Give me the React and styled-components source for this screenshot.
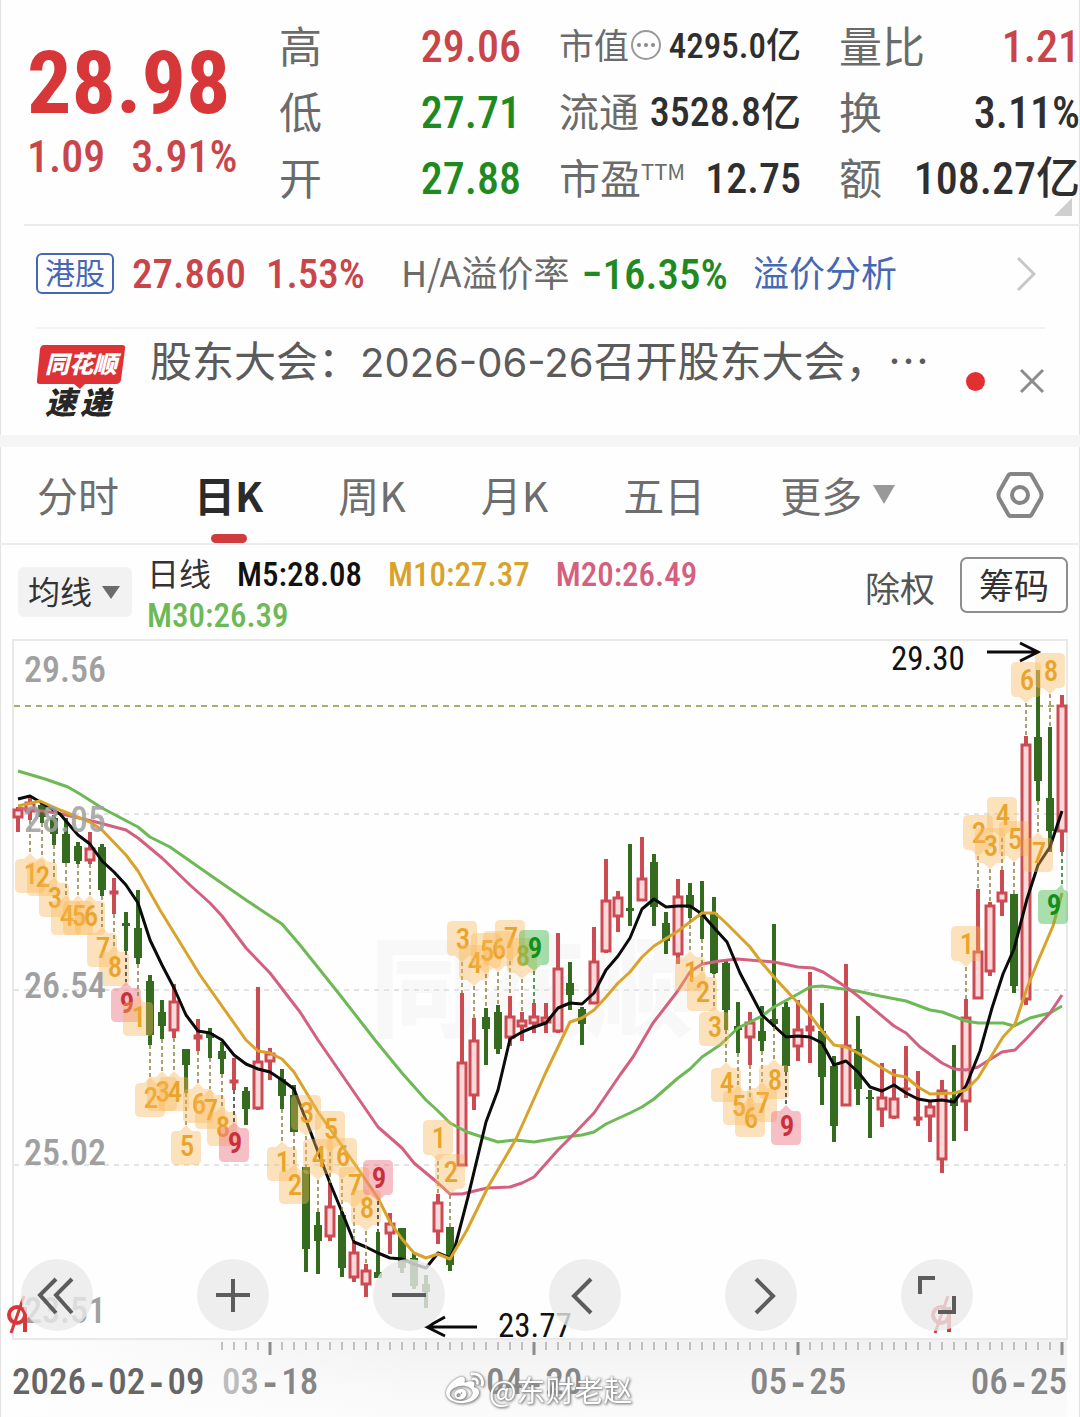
import React from "react";
import styled, { createGlobalStyle } from "styled-components";
import { FaWeibo } from "react-icons/fa";

const CJK = `"Noto Sans CJK SC", sans-serif`;
const NUM = `"Roboto Condensed", "Liberation Sans Narrow", Roboto, "Noto Sans CJK SC", sans-serif`;

const C = {
  red: "#d8373a",
  softRed: "#c9454a",
  green: "#1f8a1f",
  ink: "#2f2f2f",
  label: "#6b6b6b",
  blue: "#4668b4",
  gold: "#d9a32b",
  pink: "#d4607f",
  lime: "#6cb955",
};

const GlobalStyle = createGlobalStyle`
  * { box-sizing: border-box; }
  body { margin: 0; background: #fefefe; font-family: ${CJK}; }
  button, select { font-family: inherit; }
`;

const Page = styled.main`
  position: relative;
  box-shadow: inset 1px 0 #e2e2e2, inset -1px 0 #e2e2e2;
  overflow: hidden;
`;

/* ---------- quote header ---------- */

const Quote = styled.section`
  display: grid;
  grid-template-columns: 214fr 242fr 242fr 241fr;
  column-gap: 38px;
  padding: 14px 0 12px 27px;
`;

const PriceBlock = styled.div`
  display: flex;
  flex-direction: column;
  min-width: 0;
  padding-top: 22px;
  color: ${C.red};
  font-family: ${NUM};
  white-space: nowrap;
`;

const Price = styled.div`
  font-size: 88px;
  font-weight: 700;
  line-height: 94px;
`;

const Change = styled.div`
  display: flex;
  gap: 26px;
  color: ${C.softRed};
  font-size: 44px;
  font-weight: 500;
  line-height: 54px;
`;

const Stats = styled.dl`
  margin: 0;
  min-width: 0;
  display: grid;
  grid-auto-rows: 66px;
`;

const Stat = styled.div`
  display: flex;
  align-items: center;
  justify-content: space-between;
  white-space: nowrap;
`;

const StatLabel = styled.dt`
  display: flex;
  align-items: center;
  padding-bottom: 6px;
  color: ${C.label};
  font-size: ${(p) => p.$size || 43}px;
  line-height: 60px;
`;

const StatValue = styled.dd`
  margin: 0;
  color: ${(p) => p.$color || C.ink};
  font-family: ${NUM};
  font-size: ${(p) => p.$size || 44}px;
  font-weight: 500;
  line-height: 66px;
`;

const Ttm = styled.span`
  align-self: flex-start;
  font-family: ${CJK};
  font-size: 22px;
  line-height: 48px;
`;

const Corner = styled.i`
  position: absolute;
  top: 198px;
  right: 8px;
  border-left: 18px solid transparent;
  border-bottom: 18px solid #cfcfcf;
`;

/* ---------- HK row and news ---------- */

const HkRow = styled.section`
  display: flex;
  align-items: center;
  height: 103px;
  margin-left: 24px;
  padding: 0 44px 6px 12px;
  border-top: 2px solid #ebebeb;
  white-space: nowrap;
`;

const Tag = styled.span`
  width: 78px;
  height: 41px;
  border: 2px solid ${C.blue};
  border-radius: 6px;
  color: ${C.blue};
  font-size: 30px;
  line-height: 33px;
  text-align: center;
`;

const Figure = styled.span`
  margin-left: ${(p) => p.$gap}px;
  color: ${(p) => p.$color};
  font-family: ${NUM};
  font-size: ${(p) => p.$size || 41}px;
  font-weight: 500;
`;

const Premium = styled.span`
  margin-left: 36px;
  padding-bottom: 6px;
  color: ${C.label};
  font-size: 36px;
`;

const BlueLink = styled.a`
  margin-left: 25px;
  padding-bottom: 6px;
  color: ${C.blue};
  font-size: 36px;
  text-decoration: none;
`;

const IconButton = styled.button`
  display: flex;
  padding: 0;
  border: 0;
  background: none;
  cursor: pointer;
  ${(p) => p.$push && "margin-left: auto;"}
`;

const News = styled.section`
  display: flex;
  align-items: flex-start;
  height: 108px;
  margin: 0 35px 0 36px;
  border-top: 2px solid #f3f3f3;
`;

const Logo = styled.svg`
  flex: none;
  margin-top: 15px;
`;

const NewsText = styled.p`
  flex: 1;
  margin: 0 0 0 22px;
  overflow: hidden;
  color: #5b5b5b;
  font-size: 42px;
  line-height: 60px;
  white-space: nowrap;
`;

const NewsDate = styled.span`
  font-family: Inter, sans-serif;
  font-size: 40px;
`;

const NewsTools = styled.div`
  display: flex;
  align-items: center;
  gap: 34px;
  padding-top: 39px;
`;

const Dot = styled.i`
  width: 19px;
  height: 19px;
  border-radius: 50%;
  background: #e42f31;
`;

/* ---------- tabs ---------- */

const Tabs = styled.nav`
  display: flex;
  align-items: center;
  gap: 75px;
  height: 110px;
  padding: 0 36px 0 37px;
  border-top: 12px solid #f5f5f5;
  border-bottom: 2px solid #ececec;
`;

const Tab = styled.button`
  position: relative;
  display: flex;
  align-items: center;
  gap: 11px;
  height: 96px;
  padding: 0 0 2px;
  border: 0;
  background: none;
  color: ${(p) => (p.$active ? "#2b2b2b" : "#6e6e6e")};
  font-size: 41px;
  font-weight: ${(p) => (p.$active ? 700 : 400)};
  white-space: nowrap;
  cursor: pointer;
  ${(p) =>
    p.$active &&
    `&::after {
      content: "";
      position: absolute;
      left: 50%;
      bottom: 0;
      width: 36px;
      height: 9px;
      margin-left: -18px;
      border-radius: 5px;
      background: #cf3c3e;
    }`}
`;

const Triangle = styled.i`
  border: ${(p) => p.$size}px solid transparent;
  border-top: ${(p) => p.$depth}px solid ${(p) => p.$color};
  border-bottom: 0;
`;

/* ---------- legend ---------- */

const LegendBar = styled.section`
  display: flex;
  align-items: flex-start;
  height: 94px;
  padding: 9px 12px 0 18px;
`;

const SelectBox = styled.label`
  display: flex;
  align-items: center;
  width: 114px;
  height: 50px;
  margin-top: 13px;
  padding: 0 12px 0 10px;
  border-radius: 6px;
  background: #f2f2f2;
`;

const Select = styled.select`
  appearance: none;
  flex: 1;
  width: 66px;
  padding: 0 0 4px;
  border: 0;
  background: none;
  color: #333;
  font-size: 32px;
  line-height: 46px;
`;

const Legend = styled.div`
  flex: 1;
  display: flex;
  flex-wrap: wrap;
  align-content: flex-start;
  column-gap: 26px;
  max-width: 600px;
  margin-left: 15px;
`;

const LegendItem = styled.span`
  color: ${(p) => p.$color};
  font-family: ${(p) => (p.$cjk ? CJK : NUM)};
  font-size: ${(p) => (p.$cjk ? 32 : 33)}px;
  font-weight: ${(p) => (p.$cjk ? 400 : 500)};
  line-height: ${(p) => (p.$cjk ? 36 : 41)}px;
  white-space: nowrap;
`;

const LegendTools = styled.div`
  display: flex;
  align-items: center;
  gap: 25px;
  margin-left: auto;
  padding-top: 3px;
`;

const PlainButton = styled.button`
  padding: 4px 0 0;
  border: 0;
  background: none;
  color: #555;
  font-size: 35px;
  line-height: 48px;
`;

const BoxButton = styled.button`
  width: 108px;
  height: 56px;
  padding: 0 0 2px;
  border: 2px solid #8e8e8e;
  border-radius: 7px;
  background: none;
  color: #333;
  font-size: 35px;
  line-height: 48px;
`;

/* ---------- chart ---------- */

const ChartPanel = styled.section`
  position: relative;
`;

const ChartSvg = styled.svg`
  display: block;
  width: 100%;
  height: auto;
`;

const Controls = styled.div`
  position: absolute;
  left: 21px;
  bottom: 86px;
  display: flex;
  gap: 104px;
`;

const Round = styled.button`
  display: flex;
  width: 72px;
  height: 72px;
  padding: 0;
  border: 0;
  border-radius: 50%;
  background: rgba(234, 234, 234, 0.8);
  cursor: pointer;
`;

const Watermark = styled.div`
  position: absolute;
  left: 446px;
  bottom: 7px;
  display: flex;
  align-items: center;
  gap: 5px;
  color: #fff;
  font-size: 29px;
  line-height: 42px;
  white-space: nowrap;
  filter: drop-shadow(0 0 1px #777) drop-shadow(1px 1px 1px #999);
`;

// [kind, wick top, wick bottom, body top, body bottom]
const CANDLES = [
  ["r", 807, 832, 809, 818], ["r", 796, 820, 802, 812], ["g", 802, 823, 805, 817], ["g", 815, 845, 818, 834],
  ["g", 818, 863, 834, 863], ["g", 842, 864, 846, 861], ["r", 832, 864, 848, 861], ["g", 844, 896, 847, 890],
  ["r", 878, 914, 891, 894], ["g", 912, 951, 923, 926], ["g", 890, 964, 928, 958], ["g", 975, 1045, 981, 1035],
  ["g", 1000, 1039, 1012, 1026], ["r", 984, 1038, 1001, 1031], ["g", 1049, 1093, 1049, 1065], ["r", 1019, 1051, 1035, 1039],
  ["g", 1028, 1058, 1033, 1038], ["g", 1042, 1074, 1051, 1059], ["r", 1058, 1090, 1080, 1083], ["g", 1087, 1125, 1091, 1109],
  ["r", 987, 1110, 1061, 1109], ["r", 1048, 1080, 1053, 1062], ["g", 1069, 1109, 1079, 1096], ["g", 1085, 1132, 1095, 1132],
  ["g", 1167, 1272, 1167, 1249], ["g", 1212, 1274, 1225, 1241], ["r", 1183, 1241, 1206, 1237], ["g", 1212, 1277, 1215, 1268],
  ["r", 1242, 1282, 1252, 1278], ["r", 1264, 1297, 1270, 1285], ["g", 1232, 1278, 1272, 1278], ["r", 1213, 1254, 1223, 1234],
  ["g", 1228, 1273, 1228, 1268], ["g", 1253, 1289, 1258, 1286], ["g", 1275, 1308, 1284, 1292], ["r", 1194, 1244, 1202, 1232],
  ["g", 1227, 1271, 1227, 1265], ["r", 993, 1166, 1062, 1166], ["r", 1018, 1110, 1040, 1096], ["g", 1008, 1065, 1017, 1029],
  ["g", 1005, 1054, 1012, 1049], ["r", 996, 1046, 1016, 1038], ["r", 1012, 1041, 1020, 1027], ["r", 1003, 1033, 1016, 1024],
  ["r", 1003, 1033, 1017, 1023], ["r", 933, 1033, 968, 1032], ["g", 962, 1010, 983, 995], ["g", 1007, 1045, 1009, 1024],
  ["r", 927, 1004, 961, 1004], ["r", 859, 953, 900, 952], ["r", 891, 932, 897, 917], ["g", 844, 926, 908, 911],
  ["r", 837, 901, 878, 901], ["g", 854, 926, 862, 907], ["g", 912, 954, 923, 941], ["r", 879, 964, 896, 955],
  ["g", 883, 918, 895, 908], ["g", 881, 939, 912, 917], ["g", 897, 974, 913, 973], ["g", 959, 1030, 963, 1010],
  ["g", 1002, 1053, 1026, 1030], ["r", 1012, 1065, 1022, 1038], ["g", 1006, 1051, 1031, 1041], ["g", 924, 1027, 1019, 1024],
  ["g", 1002, 1072, 1007, 1066], ["r", 1000, 1061, 1029, 1047], ["r", 972, 1063, 1026, 1031], ["g", 1003, 1105, 1031, 1077],
  ["g", 1056, 1142, 1066, 1126], ["r", 964, 1106, 1045, 1106], ["g", 1016, 1105, 1049, 1089], ["g", 1090, 1138, 1097, 1099],
  ["r", 1063, 1127, 1097, 1110], ["r", 1069, 1119, 1098, 1118], ["r", 1046, 1098, 1088, 1090], ["r", 1071, 1126, 1117, 1120],
  ["r", 1102, 1142, 1106, 1117], ["r", 1080, 1173, 1090, 1160], ["g", 1045, 1141, 1098, 1106], ["r", 999, 1131, 1017, 1102],
  ["r", 889, 999, 951, 999], ["r", 902, 976, 905, 972], ["r", 870, 916, 892, 902], ["g", 894, 993, 894, 986],
  ["r", 736, 1005, 744, 1000], ["g", 670, 801, 737, 781], ["g", 727, 852, 798, 831], ["r", 695, 852, 705, 832],
];

const LINES = [
  [C.lime, "18,771 45,779 68,787 80,794 102,808 138,827 150,837 170,847 210,875 246,900 258,908 282,924 300,945 340,995 375,1040 402,1073 426,1100 438,1111 450,1123 467,1132 498,1142 515,1140 534,1142 558,1138 582,1135 594,1132 606,1124 630,1113 642,1107 654,1099 678,1078 690,1069 702,1057 720,1045 738,1028 762,1016 774,1007 798,994 810,987 822,986 857,991 880,996 906,1001 930,1010 942,1012 966,1021 978,1023 1003,1023 1014,1026 1030,1018 1050,1013 1062,1006"],
  [C.pink, "18,808 50,812 66,815 96,822 126,830 138,838 162,858 190,885 210,903 222,916 246,948 270,973 300,1012 318,1040 378,1127 402,1148 414,1163 438,1183 450,1194 462,1194 487,1188 510,1187 522,1183 534,1177 558,1150 570,1138 594,1113 620,1075 633,1057 653,1023 677,992 690,972 702,964 720,961 737,959 774,962 798,967 813,968 823,972 846,987 858,996 894,1026 906,1033 920,1047 942,1063 954,1069 966,1070 978,1067 1002,1052 1015,1050 1027,1038 1050,1013 1062,995"],
  ["#0b0b0b", "18,799 30,796 42,803 60,814 78,835 90,844 102,861 114,872 126,885 138,903 150,940 162,965 174,988 186,1015 198,1031 210,1033 222,1040 234,1055 246,1064 258,1069 270,1072 282,1080 294,1089 306,1120 320,1157 330,1183 342,1212 354,1242 366,1247 378,1253 390,1258 402,1259 414,1264 426,1268 438,1253 450,1258 455,1247 468,1197 486,1122 498,1090 510,1039 522,1032 534,1027 546,1023 558,1008 570,1003 582,1004 594,993 606,970 618,956 630,938 642,909 654,899 666,907 678,906 690,906 702,914 716,930 727,942 740,973 762,1015 774,1026 786,1037 798,1036 810,1037 822,1043 834,1065 846,1061 858,1072 870,1087 882,1091 894,1085 906,1093 918,1099 930,1101 942,1100 954,1102 966,1086 980,1051 992,1008 1003,974 1014,949 1027,899 1038,865 1050,847 1062,811"],
  [C.gold, "18,806 40,801 60,810 90,822 102,830 126,855 138,871 160,910 200,975 246,1040 258,1051 270,1053 282,1059 294,1072 318,1112 340,1143 354,1163 378,1198 390,1222 402,1239 414,1253 426,1258 438,1254 450,1259 467,1230 488,1187 516,1139 546,1072 558,1047 570,1022 582,1018 594,1010 606,997 618,983 630,972 642,957 654,946 678,931 702,913 715,913 726,923 750,947 762,963 774,977 798,1003 810,1015 822,1031 834,1045 846,1047 858,1053 882,1068 894,1075 906,1077 918,1087 930,1094 954,1093 966,1090 978,1078 1003,1037 1015,1024 1027,988 1038,961 1053,926 1062,893"],
];

// [candle index, digit, digit centre y, side of the candle: "b" below or "a" above, tone]
const BADGES = [
  [1, 1, 874, "b"], [2, 2, 877, "b"], [3, 3, 898, "b"], [4, 4, 916, "b"], [5, 5, 916, "b"], [6, 6, 916, "b"],
  [7, 7, 948, "b"], [8, 8, 967, "b"], [9, 9, 1003, "b", "r"],
  [10, 1, 1017, "b"], [11, 2, 1098, "b"], [12, 3, 1092, "b"], [13, 4, 1092, "b"], [14, 5, 1146, "b"],
  [15, 6, 1104, "b"], [16, 7, 1110, "b"], [17, 8, 1127, "b"], [18, 9, 1143, "b", "r"],
  [22, 1, 1162, "b"], [23, 2, 1185, "b"],
  [24, 3, 1113, "a"], [25, 4, 1157, "a"], [26, 5, 1129, "a"], [27, 6, 1156, "a"], [28, 7, 1185, "a"],
  [29, 8, 1208, "a"], [30, 9, 1178, "a", "r"],
  [35, 1, 1138, "a"], [36, 2, 1172, "a"], [37, 3, 939, "a"], [38, 4, 963, "a"], [39, 5, 951, "a"],
  [40, 6, 949, "a"], [41, 7, 938, "a"], [42, 8, 956, "a"], [43, 9, 948, "a", "g"],
  [56, 1, 972, "b"], [57, 2, 992, "b"], [58, 3, 1027, "b"], [59, 4, 1083, "b"], [60, 5, 1106, "b"],
  [61, 6, 1118, "b"], [62, 7, 1103, "b"], [63, 8, 1080, "b"], [64, 9, 1126, "b", "r"],
  [79, 1, 944, "a"], [80, 2, 833, "a"], [81, 3, 846, "a"], [82, 4, 815, "a"], [83, 5, 839, "a"],
  [84, 6, 680, "a"], [85, 7, 853, "b"], [86, 8, 671, "a"], [87, 9, 905, "b", "g"],
];

const TONES = {
  y: ["#fbb95a", 0.4, "#e9a52b", "#8f8340"],
  r: ["#ee7483", 0.46, "#c9303b", "#333"],
  g: ["#4ebd55", 0.48, "#128f1c", "#1f7a2a"],
};

const xAt = (i) => 18 + 12 * i;

function Candle({ i, data: [kind, w1, w2, b1, b2] }) {
  const x = xAt(i);
  if (kind === "g") {
    return (
      <g fill="#356b1f">
        <rect x={x - 2} y={w1} width="4" height={w2 - w1} />
        <rect x={x - 4} y={b1} width="8" height={b2 - b1} />
      </g>
    );
  }
  const flat = b2 - b1 < 6;
  return (
    <g>
      <rect x={x - 2} y={w1} width="4" height={w2 - w1} fill="#cc4a52" />
      <rect
        x={x - 4}
        y={b1 + (flat ? 0 : 1)}
        width="8"
        height={Math.max(b2 - b1 - (flat ? 0 : 2), 2)}
        fill={flat ? "#cc4a52" : "#fbd9da"}
        stroke="#cc4a52"
        strokeWidth={flat ? 1 : 3}
      />
    </g>
  );
}

function Badge({ data: [i, digit, y, side, tone = "y"] }) {
  const x = xAt(i);
  const cx = Math.min(x, 1053);
  const [fill, alpha, ink, lead] = TONES[tone];
  const below = side === "b";
  const top = y - (below ? 15 : 18);
  const bottom = y + (below ? 19 : 17);
  const l = cx - 15;
  const r = cx + 15;
  const shape = below
    ? `M${l + 5},${top} H${x - 6} L${x},${top - 6} L${Math.min(x + 6, r - 4)},${top} H${r - 4} Q${r},${top} ${r},${top + 5} V${bottom - 5} Q${r},${bottom} ${r - 5},${bottom} H${l + 5} Q${l},${bottom} ${l},${bottom - 5} V${top + 5} Q${l},${top} ${l + 5},${top} Z`
    : `M${l + 5},${top} H${r - 5} Q${r},${top} ${r},${top + 5} V${bottom - 5} Q${r},${bottom} ${r - 5},${bottom} H${x + 7} L${x},${bottom + 6} L${x - 7},${bottom} H${l + 5} Q${l},${bottom} ${l},${bottom - 5} V${top + 5} Q${l},${top} ${l + 5},${top} Z`;
  const candle = CANDLES[i];
  return (
    <g>
      <line
        x1={x}
        x2={x}
        y1={below ? candle[2] : bottom + 6}
        y2={below ? top - 6 : candle[1]}
        stroke={lead}
        strokeWidth="1.5"
        strokeDasharray="4 3"
      />
      <path d={shape} fill={fill} fillOpacity={alpha} />
      <text x={cx + 1} y={y + 10} textAnchor="middle" fontFamily={NUM} fontSize="29" fontWeight={tone === "y" ? 500 : 600} fill={ink}>
        {digit}
      </text>
    </g>
  );
}

function ExRight({ x }) {
  return (
    <g stroke={C.red} fill="none">
      <circle cx={x} cy="1315" r="8" strokeWidth="4" />
      <path d={`M${x + 8},1307 V1332`} strokeWidth="4" />
      <path d={`M${x + 7},1296 L${x - 6},1333`} strokeWidth="3" />
    </g>
  );
}

const Hyphen = () => (
  <tspan fontFamily='"Liberation Mono", monospace' fontWeight="700">-</tspan>
);

function Chart() {
  const ticks = [];
  for (let x = 222; x <= 1062; x += 12) ticks.push(x);
  return (
    <ChartSvg viewBox="0 639 1080 778" role="img" aria-label="日K">
      <defs>
        <linearGradient id="axis" x1="0" x2="0" y1="0" y2="1">
          <stop offset="0" stopColor="#f1f1f1" />
          <stop offset="0.6" stopColor="#f8f8f8" />
          <stop offset="1" stopColor="#fbfbfb" />
        </linearGradient>
        <linearGradient id="axisFade" x1="0" x2="1" y1="0" y2="0">
          <stop offset="0" stopColor="#fefefe" />
          <stop offset="1" stopColor="#fefefe" stopOpacity="0" />
        </linearGradient>
      </defs>
      <rect x="1" y="1339" width="1066" height="78" fill="url(#axis)" />
      <rect x="1" y="1339" width="420" height="78" fill="url(#axisFade)" />
      <rect x="13" y="640" width="1054" height="699" fill="none" stroke="#e9e9e9" strokeWidth="2" />
      <text x="532" y="1028" textAnchor="middle" fontFamily={CJK} fontSize="108" fontWeight="900" fill="#f8f8f8">
        同花顺
      </text>
      {[814, 990, 1165].map((y) => (
        <line key={y} x1="14" x2="1066" y1={y} y2={y} stroke="#e3e3e3" strokeWidth="2" strokeDasharray="5 5" />
      ))}
      <line x1="14" x2="1066" y1="706" y2="706" stroke="#a8ac6c" strokeWidth="2" strokeDasharray="6 5" />
      {CANDLES.map((c, i) => (
        <Candle key={i} i={i} data={c} />
      ))}
      {LINES.map(([color, points]) => (
        <polyline key={color} points={points} fill="none" stroke={color} strokeWidth="3" strokeLinejoin="round" />
      ))}
      {BADGES.map((b) => (
        <Badge key={b[0]} data={b} />
      ))}
      <g fontFamily={NUM} fontSize="36" fontWeight="500" fill="#a0a0a0">
        <text x="24" y="682">29.56</text>
        <text x="24" y="832" opacity="0.85">28.05</text>
        <text x="24" y="998">26.54</text>
        <text x="24" y="1165">25.02</text>
        <text x="24" y="1323">23.51</text>
      </g>
      <g fontFamily={NUM} fontSize="33" fill="#111">
        <text x="891" y="670">29.30</text>
        <text x="498" y="1337">23.77</text>
      </g>
      <g stroke="#0b0b0b" strokeWidth="3" fill="none">
        <path d="M987,652 H1037 M1020,643 L1038,652 L1020,661" />
        <path d="M477,1327 H428 M445,1317 L427,1327 L445,1336" />
      </g>
      <ExRight x={17} />
      <ExRight x={941} />
      <g stroke="#8c8c8c">
        {ticks.map((x) => {
          const major = (x - 6) % 264 === 0;
          return <line key={x} x1={x} x2={x} y1="1342" y2={major ? 1355 : 1350} strokeWidth={major ? 3 : 1} />;
        })}
      </g>
      <g fontFamily={NUM} fontSize="37" fontWeight="500" fill="#868686">
        <text x="12" y="1394" fill="#666">2026<Hyphen />02<Hyphen />09</text>
        <text x="222" y="1394"><tspan fill="#bdbdbd">0</tspan><tspan fill="#a5a5a5">3</tspan><Hyphen />18</text>
        <text x="486" y="1394">04<Hyphen />20</text>
        <text x="750" y="1394">05<Hyphen />25</text>
        <text x="1067" y="1394" textAnchor="end">06<Hyphen />25</text>
      </g>
    </ChartSvg>
  );
}

const CONTROLS = [
  ["最左", "M35,20 L19,36 L35,54 M51,20 L35,36 L51,54"],
  ["放大", "M19,36 H53 M36,20 V53"],
  ["缩小", "M19,36 H53"],
  ["向左", "M42,20 L25,37 L42,54"],
  ["向右", "M31,20 L48,37 L31,54"],
  ["全屏", "M34,19 H19 V35 M53,37 V53 H37"],
];

export default function App() {
  return (
    <Page>
      <GlobalStyle />
      <Quote>
        <PriceBlock>
          <Price>28.98</Price>
          <Change>
            <span>1.09</span>
            <span>3.91%</span>
          </Change>
        </PriceBlock>
        <Stats>
          <Stat><StatLabel>高</StatLabel><StatValue $color={C.softRed}>29.06</StatValue></Stat>
          <Stat><StatLabel>低</StatLabel><StatValue $color={C.green}>27.71</StatValue></Stat>
          <Stat><StatLabel>开</StatLabel><StatValue $color={C.green}>27.88</StatValue></Stat>
        </Stats>
        <Stats>
          <Stat>
            <StatLabel $size={35}>
              市值
              <svg width="32" height="32" viewBox="0 0 32 32" fill="none" stroke="#999" strokeWidth="2">
                <circle cx="17" cy="17" r="14" />
                <g fill="#888" stroke="none">
                  <circle cx="10" cy="17" r="2" />
                  <circle cx="17" cy="17" r="2" />
                  <circle cx="24" cy="17" r="2" />
                </g>
              </svg>
            </StatLabel>
            <StatValue $size={35}>4295.0亿</StatValue>
          </Stat>
          <Stat><StatLabel $size={40}>流通</StatLabel><StatValue $size={40}>3528.8亿</StatValue></Stat>
          <Stat><StatLabel $size={41}>市盈<Ttm>TTM</Ttm></StatLabel><StatValue $size={42}>12.75</StatValue></Stat>
        </Stats>
        <Stats>
          <Stat><StatLabel>量比</StatLabel><StatValue $color={C.softRed}>1.21</StatValue></Stat>
          <Stat><StatLabel>换</StatLabel><StatValue>3.11%</StatValue></Stat>
          <Stat><StatLabel>额</StatLabel><StatValue>108.27亿</StatValue></Stat>
        </Stats>
      </Quote>
      <Corner />

      <HkRow>
        <Tag>港股</Tag>
        <Figure $gap={18} $color={C.softRed}>27.860</Figure>
        <Figure $gap={20} $color={C.softRed}>1.53%</Figure>
        <Premium>H/A溢价率</Premium>
        <Figure $gap={12} $size={43} $color={C.green}>−16.35%</Figure>
        <BlueLink href="#premium">溢价分析</BlueLink>
        <IconButton $push aria-label="更多港股">
          <svg width="20" height="36" viewBox="0 0 20 36" fill="none" stroke="#c6c6c6" strokeWidth="3">
            <path d="M2,2 L18,18 L2,34" />
          </svg>
        </IconButton>
      </HkRow>

      <News>
        <Logo width="92" height="88" viewBox="0 0 92 88">
          <path d="M8,1 H86 Q90,1 89,5 L85,36 Q84,40 80,40 H49 L44,45 L38,40 H4 Q0,40 1,36 L4,5 Q5,1 8,1 Z" fill="#de3236" />
          <text x="45" y="29" textAnchor="middle" fontFamily={CJK} fontSize="24" fontWeight="900" fontStyle="italic" fill="#fff">同花顺</text>
          <text x="9" y="70" fontFamily={CJK} fontSize="31" fontWeight="900" fontStyle="italic" fill="#262626">速</text>
          <text x="44" y="70" fontFamily={CJK} fontSize="31" fontWeight="900" fontStyle="italic" fill="#262626">递</text>
        </Logo>
        <NewsText>
          股东大会：<NewsDate>2026-06-26</NewsDate>召开股东大会，…
        </NewsText>
        <NewsTools>
          <Dot />
          <IconButton aria-label="关闭">
            <svg width="26" height="26" viewBox="0 0 26 26" fill="none" stroke="#8b8b8b" strokeWidth="3">
              <path d="M2,2 L24,24 M24,2 L2,24" />
            </svg>
          </IconButton>
        </NewsTools>
      </News>

      <Tabs>
        <Tab>分时</Tab>
        <Tab $active>日K</Tab>
        <Tab>周K</Tab>
        <Tab>月K</Tab>
        <Tab>五日</Tab>
        <Tab aria-haspopup="menu">更多<Triangle $size={11} $depth={19} $color="#999" /></Tab>
        <IconButton $push aria-label="设置">
          <svg width="48" height="46" viewBox="0 0 48 46" fill="none" stroke="#858585" strokeWidth="4" strokeLinejoin="round">
            <path d="M15,2 H33 Q35,2 36,4 L45,20 Q46,23 45,26 L36,42 Q35,44 33,44 H15 Q13,44 12,42 L3,26 Q2,23 3,20 L12,4 Q13,2 15,2 Z" />
            <circle cx="24" cy="23" r="8" />
          </svg>
        </IconButton>
      </Tabs>

      <LegendBar>
        <SelectBox>
          <Select aria-label="指标" defaultValue="均线">
            <option>均线</option>
          </Select>
          <Triangle $size={9} $depth={13} $color="#6b6b6b" />
        </SelectBox>
        <Legend>
          <LegendItem $cjk $color="#333">日线</LegendItem>
          <LegendItem $color="#111">M5:28.08</LegendItem>
          <LegendItem $color={C.gold}>M10:27.37</LegendItem>
          <LegendItem $color={C.pink}>M20:26.49</LegendItem>
          <LegendItem $color={C.lime}>M30:26.39</LegendItem>
        </Legend>
        <LegendTools>
          <PlainButton>除权</PlainButton>
          <BoxButton>筹码</BoxButton>
        </LegendTools>
      </LegendBar>

      <ChartPanel>
        <Chart />
        <Controls>
          {CONTROLS.map(([name, d]) => (
            <Round key={name} aria-label={name}>
              <svg width="72" height="72" viewBox="0 0 72 72" fill="none" stroke="#5c5c5c" strokeWidth="4">
                <path d={d} />
              </svg>
            </Round>
          ))}
        </Controls>
        <Watermark>
          <FaWeibo size={38} />
          <span>@东财老赵</span>
        </Watermark>
      </ChartPanel>
    </Page>
  );
}
